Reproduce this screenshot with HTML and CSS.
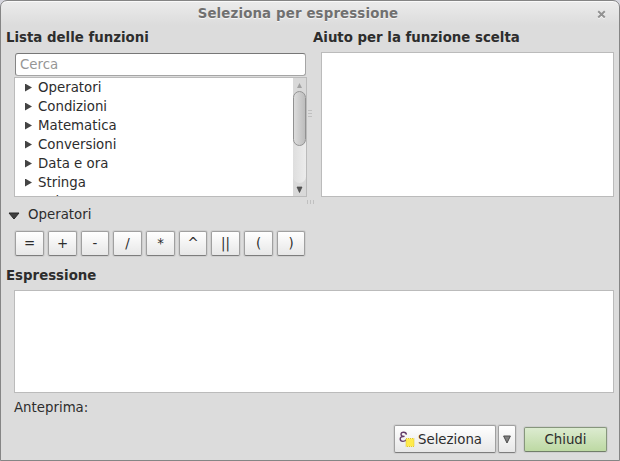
FILE: index.html
```html
<!DOCTYPE html>
<html lang="it">
<head>
<meta charset="utf-8">
<title>Seleziona per espressione</title>
<link rel="stylesheet" href="styles.css">
</head>
<body>
<div class="window">
  <header class="titlebar">
    <span class="title">Seleziona per espressione</span>
    <svg class="close" width="9" height="9" viewBox="0 0 9 9"><path d="M1.2 2.2 7.8 8.4M7.8 2.2 1.2 8.4" stroke="#f8f8f8" stroke-width="2"/><path d="M1.2 1.2 7.8 7.4M7.8 1.2 1.2 7.4" stroke="#929292" stroke-width="2"/></svg>
  </header>
  <main class="upper">
    <section class="functions">
      <h2>Lista delle funzioni</h2>
      <input class="search" type="text" placeholder="Cerca">
      <div class="tree">
        <ul>
          <li>Operatori</li>
          <li>Condizioni</li>
          <li>Matematica</li>
          <li>Conversioni</li>
          <li>Data e ora</li>
          <li>Stringa</li>
          <li>Colore</li>
        </ul>
        <div class="scrollbar">
          <svg width="13" height="13" viewBox="0 0 13 13"><path d="M6.5 5 9 10H4Z" fill="#a2a2a2"/></svg>
          <div class="track"><div class="thumb"></div></div>
          <svg width="13" height="13" viewBox="0 0 13 13"><path d="M4 4h5L6.5 9.5Z" fill="#555" stroke="#444" stroke-width=".7"/></svg>
        </div>
      </div>
    </section>
    <div class="grip vertical"><i></i><i></i><i></i></div>
    <section class="help">
      <h2>Aiuto per la funzione scelta</h2>
      <div class="helpbox"></div>
    </section>
  </main>
  <div class="grip horizontal"><i></i><i></i><i></i></div>
  <div class="group"><svg width="12" height="8" viewBox="0 0 12 8"><path d="M1 1h10L6 7Z" fill="#3f3f3f" stroke="#282828"/></svg><span>Operatori</span></div>
  <div class="operators">
    <button>=</button><button>+</button><button>-</button><button>/</button><button>*</button><button>^</button><button>||</button><button>(</button><button>)</button>
  </div>
  <h2 class="expression-title">Espressione</h2>
  <div class="expression"></div>
  <div class="preview">Anteprima:</div>
  <footer>
    <button class="select">
      <svg width="16" height="18" viewBox="0 0 16 18"><path d="M7.4 4.600C7.200 1.500 2 1.400 2 4.200c0 1.600 1.500 2.200 3.600 2.200C3 6.400 1.200 7.300 1.200 9c0 3.100 5.200 3 6.500.3" fill="none" stroke="#633b68" stroke-width="1.400"/><rect x="7" y="8.500" width="8" height="8" fill="#ffeb4c" stroke="#dfc52e" stroke-dasharray="1 1"/></svg>
      <span>Seleziona</span>
    </button>
    <button class="menu"><svg width="8" height="9" viewBox="0 0 8 9"><path d="M.6 1h6.800L4 8Z" fill="#808080" stroke="#4c4c4c"/></svg></button>
    <button class="dismiss">Chiudi</button>
  </footer>
</div>
</body>
</html>
```
FILE: styles.css
```css
* { box-sizing: border-box; }
body { margin: 0; background: #d5d5dd; overflow: hidden; }
body, input, button { font-family: "DejaVu Sans", sans-serif; font-size: 13.33px; color: #2d2d2d; }
.window {
  height: 461px;
  border: 1px solid #858585;
  border-radius: 7px 7px 0 0;
  background: linear-gradient(#ececec, #dcdcdc 24px);
  box-shadow: inset 0 1px #fafafa;
  display: flex;
  flex-direction: column;
}
.titlebar { height: 25px; display: flex; align-items: center; flex: none; padding-right: 13px; }
.title { flex: 1; padding-right: 2px; text-align: center; font-weight: bold; letter-spacing: .15px; color: #707070; text-shadow: 0 1px #f5f5f5; }
.close { display: block; margin-top: 1px; }
h2 { margin: 0; font-size: 13.33px; height: 22px; line-height: 24px; font-weight: bold; white-space: nowrap; }
.upper { display: flex; height: 171px; flex: none; padding: 0 5px; }
.functions { width: 301px; display: flex; flex-direction: column; }
.search {
  margin: 5px 0 0 9px; width: 291px; height: 23px; padding: 0 4px; flex: none;
  border: 1px solid #a5a5a5; border-top-color: #777; border-left-color: #858585; border-radius: 3px;
  background: #fff; outline: 0;
}
.search::placeholder { color: #969696; opacity: 1; }
.tree { margin: 1px 0 0 8px; height: 120px; border: 1px solid #bbb; background: #fff; display: flex; overflow: hidden; }
ul { list-style: none; margin: 0; padding: 0; flex: 1; }
li { height: 19px; line-height: 19px; padding-left: 10px; display: flex; align-items: center; }
li::before { content: ""; width: 7px; height: 8px; margin-right: 6px; background: #444; clip-path: polygon(0 0, 100% 50%, 0 100%); }
.scrollbar { width: 13px; background: #d9d9d9; display: flex; flex-direction: column; }
.scrollbar svg { display: block; flex: none; }
.track { flex: 1; border-radius: 7px; background: linear-gradient(90deg, #dedede, #ececec); }
.thumb { height: 55px; border: 1px solid #929292; border-radius: 7px; background: linear-gradient(90deg, #dcdcdc, #bdbdbd); }
.grip { display: flex; justify-content: center; gap: 2px; }
.grip i { background: #c0c0c0; }
.vertical { width: 6px; flex-direction: column; padding: 4px 1px 0; }
.vertical i { height: 1px; width: 4px; }
.horizontal { height: 8px; flex: none; padding: 3px 0 1px 1px; }
.horizontal i { width: 1px; height: 4px; }
.help { flex: 1; }
.helpbox { margin: 4px 0 0 8px; height: 145px; border: 1px solid #bbb; background: #fff; }
.help { padding-top: 1px; }
.help h2 { margin-top: -1px; }
.group { display: flex; align-items: center; gap: 8px; height: 18px; padding-left: 7px; flex: none; }
.group svg { margin-top: 3px; }
button {
  padding: 0; border: 1px solid #a0a0a0; border-bottom-color: #7d7d7d; border-radius: 2px;
  background: linear-gradient(#fff, #e7e7e7); box-shadow: 0 0 0 1px #cfcfcf;
}
.operators { display: grid; grid-template-columns: 29px 29px 28px 29px 29px 28px 29px 29px 28px; gap: 4px; margin: 8px 0 0 14px; height: 25px; flex: none; }
.operators button { height: 25px; line-height: 22px; }
.expression-title { margin: 8px 0 0 5px; }
.expression { margin: 4px 5px 0 13px; height: 103px; border: 1px solid #bbb; background: #fff; flex: none; }
.preview { padding-left: 13px; height: 28px; line-height: 30px; }
footer { display: flex; justify-content: flex-end; align-items: center; padding-right: 12px; height: 36px; }
.select { width: 102px; height: 28px; display: flex; align-items: center; padding-left: 4px; gap: 3px; }
.menu { width: 18px; height: 28px; margin-left: 2px; display: flex; align-items: center; justify-content: center; }
.dismiss { width: 83px; height: 25px; margin-left: 8px; border-color: #86967c; border-bottom-color: #717e69; background: linear-gradient(#dcebd0, #bdd9a3); }
```
